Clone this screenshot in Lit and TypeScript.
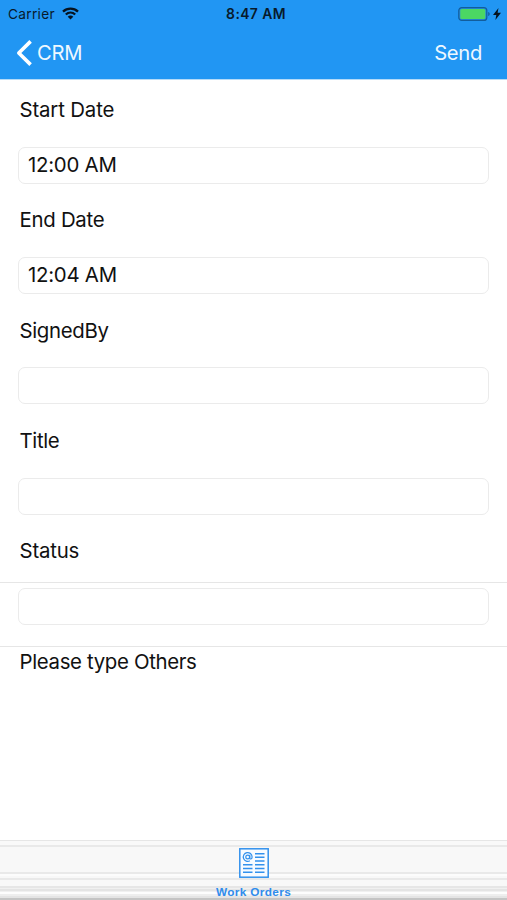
import { LitElement, html, css, svg } from "lit";
import { customElement } from "lit/decorators.js";

interface Field {
  label: string;
  value?: string;
  cls: string;
  ruled?: boolean;
}

const fields: Field[] = [
  { label: "Start Date", value: "12:00 AM", cls: "start" },
  { label: "End Date", value: "12:04 AM", cls: "end" },
  { label: "SignedBy", cls: "signed" },
  { label: "Title", cls: "title" },
  { label: "Status", cls: "status", ruled: true },
];

@customElement("app-root")
export class AppRoot extends LitElement {
  static styles = css`
    :host {
      display: flex;
      flex-direction: column;
      width: 507px;
      height: 900px;
      overflow: hidden;
      background: #fff;
      color: #111;
      font-family: Inter, "Liberation Sans", sans-serif;
      white-space: nowrap;
    }
    svg { display: block; }
    header {
      height: 79px;
      flex: none;
      background: #2196f3;
      box-shadow: 0 1px 0 #b5dbf8;
    }
    .statusbar {
      display: grid;
      grid-template-columns: 1fr auto 1fr;
      height: 27px;
      align-items: center;
      color: #081a2b;
      padding: 0 6px 0 8px;
      font-size: 13.7px;
    }
    .carrier { display: flex; align-items: center; gap: 7px; letter-spacing: 0.3px; }
    .clock { font-weight: 600; font-size: 13.9px; letter-spacing: 0.4px; padding-left: 3px; }
    .power { display: flex; justify-content: flex-end; align-items: center; gap: 3px; }
    .nav {
      height: 51px;
      display: flex;
      align-items: center;
      justify-content: space-between;
      padding: 0 25px 0 16px;
      color: #eef8ff;
      font-size: 20.2px;
    }
    .back { display: flex; align-items: center; gap: 5px; }
    .crm { letter-spacing: -0.2px; }
    .send { letter-spacing: -0.3px; }
    main { flex: 1; padding-top: 13px; font-size: 20.4px; }
    .field { height: 110.35px; display: flex; flex-direction: column; }
    .label { height: 36px; line-height: 36.4px; padding-left: 19.5px; }
    .text { letter-spacing: -0.34px; }
    .start { letter-spacing: -0.15px; }
    .end { letter-spacing: -0.28px; }
    .status { letter-spacing: -0.2px; }
    .slot { margin-top: 12.6px; padding: 5px 18px 0; height: 58px; border: solid transparent; border-width: 1px 0; }
    .ruled .slot { border-color: #e6e6e6; flex: none; }
    .input {
      box-sizing: border-box;
      height: 37px;
      border: 1px solid #ebebeb;
      border-radius: 7px;
      padding-left: 9px;
      line-height: 34px;
      background: #fff;
    }
    .value { letter-spacing: -0.25px; }
    footer {
      height: 61px;
      flex: none;
      box-sizing: border-box;
      padding-top: 9px;
      display: flex;
      flex-direction: column;
      align-items: center;
      color: #2f8cec;
      background: linear-gradient(
        #ffffff 0 1px, #e6e6e6 1px 2px, #f9f9f9 2px 6px, #e9e9e9 6px 8px, #f8f8f8 8px 33px,
        #e9e9e9 33px 35px, #fcfcfc 35px 37px, #f8f8f8 37px 39px, #e9e9e9 39px 41px,
        #f8f8f8 41px 47px, #e6e6e6 47px 49px, #f0f0f0 49px 50px, #e4e4e4 50px 52px,
        #f0f0f0 52px 53px, #fdfdfd 53px 55px, #eeeeee 55px 57px, #e4e4e4 57px 59px,
        #c4c4c4 59px 61px
      );
    }
    .tab { font: 700 11.8px/16px "Liberation Sans", sans-serif; margin-top: 6px; letter-spacing: 0.35px; }
  `;

  render() {
    return html`
      <header>
        <div class="statusbar">
          <div class="carrier"><span>Carrier</span>
            <svg width="17" height="13" viewBox="0 0 17 13" fill="none" stroke="#061320" stroke-width="2.3">
              <path d="M1 4.7C5.2.7 11.8.7 16 4.7M3.8 7.5c2.7-2.5 6.7-2.5 9.4 0" />
              <path d="M8.5 12.4 5.7 9.7c1.6-1.5 4-1.5 5.6 0z" fill="#061320" stroke="none" />
            </svg>
          </div>
          <span class="clock">8:47 AM</span>
          <div class="power">
            <svg width="32" height="14" viewBox="0 0 32 14">
              <rect x=".8" y=".6" width="28" height="12.8" rx="3" fill="#258edc" stroke="#125d9c" stroke-width="1.2" />
              <rect x="2.3" y="2.1" width="25" height="9.8" rx="1.5" fill="#4bd763" />
              <path d="M30.2 5c2 .5 2 3.5 0 4z" fill="#125d9c" />
            </svg>
            <svg width="8" height="12" viewBox="0 0 8 12"><path d="M5.5 0 0 7h3.3L2.4 12 8 4.8H4.6z" fill="#061320" /></svg>
          </div>
        </div>
        <div class="nav">
          <div class="back">
            <svg width="16" height="26" viewBox="0 0 16 26" fill="none" stroke="#fff" stroke-width="3.6" stroke-linejoin="round">
              <path d="M14.6 1.4 2.8 13l11.8 11.6" />
            </svg>
            <span class="crm">CRM</span>
          </div>
          <span class="send">Send</span>
        </div>
      </header>
      <main>
        ${fields.map((f) => html`
          <div class="field ${f.ruled ? "ruled" : ""}">
            <div class="label"><span class="text ${f.cls}">${f.label}</span></div>
            <div class="slot"><div class="input"><span class="value">${f.value ?? ""}</span></div></div>
          </div>`)}
        <div class="label"><span class="text other">Please type Others</span></div>
      </main>
      <footer>
        <svg width="30" height="30" viewBox="0 0 30 30" fill="none" stroke="#3291ed" stroke-width="1.5">
          <rect x=".8" y=".8" width="28.4" height="28.4" fill="#f8fbff" />
          <path d="M16 5.7h9.5M16 9.3h9.5M16 13h9.5M4 16.7h9.5M16 16.7h9.5M4 20.5h9.5M16 20.5h9.5M4 24.3h9.5M16 24.3h9.5" />
          ${svg`<circle cx="8.7" cy="9" r="1.9" stroke-width="1.2"/><path d="M10.8 6.8v3.3c0 1.5 2.3 1.2 2.3-1.2A4.4 4.4 0 1 0 10.9 12.8" stroke-width="1.2"/>`}
        </svg>
        <span class="tab">Work Orders</span>
      </footer>
    `;
  }
}
